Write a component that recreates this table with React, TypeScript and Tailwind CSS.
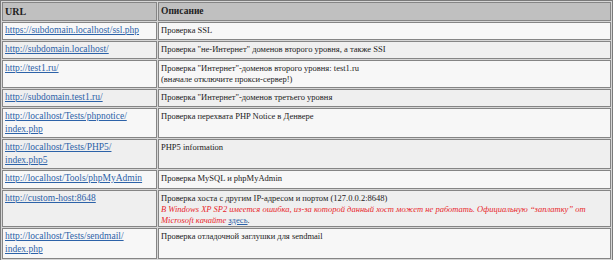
type Row = {
  url: string[]
  h: string
  desc: React.ReactNode
}

const rows: Row[] = [
  { url: ["https://subdomain.localhost/ssl.php"], h: "h-[18px]", desc: "Проверка SSL" },
  {
    url: ["http://subdomain.localhost/"],
    h: "h-[18px]",
    desc: "Проверка \"не-Интернет\" доменов второго уровня, а также SSI",
  },
  {
    url: ["http://test1.ru/"],
    h: "h-[28px]",
    desc: (
      <>
        Проверка "Интернет"-доменов второго уровня: test1.ru
        <br />
        (вначале отключите прокси-сервер!)
      </>
    ),
  },
  {
    url: ["http://subdomain.test1.ru/"],
    h: "h-[18px]",
    desc: "Проверка \"Интернет\"-доменов третьего уровня",
  },
  {
    url: ["http://localhost/Tests/phpnotice/", "index.php"],
    h: "h-[30px]",
    desc: "Проверка перехвата PHP Notice в Денвере",
  },
  { url: ["http://localhost/Tests/PHP5/", "index.php5"], h: "h-[30px]", desc: "PHP5 information" },
  {
    url: ["http://localhost/Tools/phpMyAdmin"],
    h: "h-[19px]",
    desc: "Проверка MySQL и phpMyAdmin",
  },
  {
    url: ["http://custom-host:8648"],
    h: "h-[37px]",
    desc: (
      <>
        Проверка хоста с другим IP-адресом и портом (127.0.0.2:8648)
        <br />
        <i className="text-[#e8262b]">
          В Windows XP SP2 имеется ошибка, из-за которой данный хост может не работать. Официальную
          “заплатку” от Microsoft качайте
        </i>{" "}
        <a href="#" className="text-[#2c62a8] underline">
          здесь
        </a>
        .
      </>
    ),
  },
  {
    url: ["http://localhost/Tests/sendmail/", "index.php"],
    h: "h-[31px]",
    desc: "Проверка отладочной заглушки для sendmail",
  },
]

export default function App() {
  return (
    <div className="bg-white" style={{ fontFamily: '"Liberation Serif", "Times New Roman", serif' }}>
      <table className="w-[613px] table-fixed border-separate border-spacing-px border border-[#7a7a7a] bg-[#d6d6d6] text-[#222]">
        <colgroup>
          <col className="w-[155px]" />
          <col />
        </colgroup>
        <thead>
          <tr>
            <th className="h-[19px] border border-[#858585] bg-[#c0c0c0] px-[2px] text-left align-middle text-[10px] font-bold">
              URL
            </th>
            <th className="h-[19px] border border-[#858585] bg-[#c0c0c0] px-[2px] text-left align-middle text-[9.5px] font-bold">
              Описание
            </th>
          </tr>
        </thead>
        <tbody>
          {rows.map((r, i) => {
            const bg = i % 2 === 0 ? "bg-[#f7f7f7]" : "bg-[#efefef]"
            return (
              <tr key={i}>
                <td
                  className={`${r.h} ${bg} border border-[#858585] px-[2px] pt-[1px] align-top text-[9.5px] leading-[13px]`}
                >
                  {r.url.map((u, j) => (
                    <div key={j}>
                      <a href="#" className="text-[#2c62a8] underline">
                        {u}
                      </a>
                    </div>
                  ))}
                </td>
                <td
                  className={`${r.h} ${bg} border border-[#858585] px-[2px] pt-[2px] align-top text-[8.5px] leading-[11px]`}
                >
                  {r.desc}
                </td>
              </tr>
            )
          })}
        </tbody>
      </table>
    </div>
  )
}
